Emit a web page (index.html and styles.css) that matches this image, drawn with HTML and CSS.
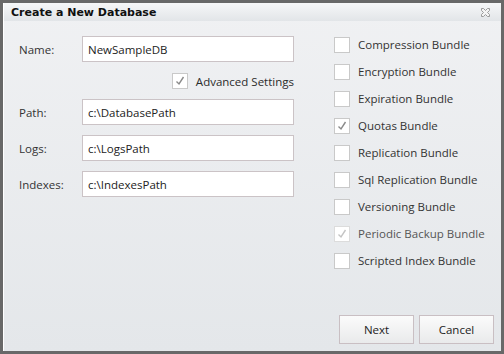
FILE: index.html
```html
<!DOCTYPE html>
<html>
<head>
<meta charset="utf-8">
<link rel="stylesheet" href="styles.css">
</head>
<body>
<div class="dialog">
  <div class="titlebar">
    <span class="title">Create a New Database</span>
    <svg class="close" width="11" height="11" viewBox="0 0 11 11"><path d="M1.5 1.5 H3.5 L5.5 3.5 L7.5 1.5 H9.5 V3.5 L7.5 5.5 L9.5 7.5 V9.5 H7.5 L5.5 7.5 L3.5 9.5 H1.5 V7.5 L3.5 5.5 L1.5 3.5 Z" fill="#f4f4f4" stroke="#9a9a9a" stroke-width="1"/></svg>
  </div>
  <div class="content">
    <div class="left">
      <div class="field"><label class="lbl">Name:</label><div class="input">NewSampleDB</div></div>
      <div class="adv"><span class="box"><svg width="14" height="14" viewBox="0 0 14 14"><path d="M3.5 7.5 L6 10 L10.5 3" fill="none" stroke="#8a8a8a" stroke-width="1.4"/></svg></span><span class="adv-text">Advanced Settings</span></div>
      <div class="field"><label class="lbl">Path:</label><div class="input">c:\DatabasePath</div></div>
      <div class="field"><label class="lbl">Logs:</label><div class="input">c:\LogsPath</div></div>
      <div class="field"><label class="lbl">Indexes:</label><div class="input">c:\IndexesPath</div></div>
    </div>
    <div class="right">
      <div class="opt"><span class="box"></span><span>Compression Bundle</span></div>
      <div class="opt"><span class="box"></span><span>Encryption Bundle</span></div>
      <div class="opt"><span class="box"></span><span>Expiration Bundle</span></div>
      <div class="opt"><span class="box"><svg width="14" height="14" viewBox="0 0 14 14"><path d="M3.5 7.5 L6 10 L10.5 3" fill="none" stroke="#8a8a8a" stroke-width="1.4"/></svg></span><span>Quotas Bundle</span></div>
      <div class="opt"><span class="box"></span><span>Replication Bundle</span></div>
      <div class="opt"><span class="box"></span><span>Sql Replication Bundle</span></div>
      <div class="opt"><span class="box"></span><span>Versioning Bundle</span></div>
      <div class="opt disabled"><span class="box"><svg width="14" height="14" viewBox="0 0 14 14"><path d="M3.5 7.5 L6 10 L10.5 3" fill="none" stroke="#c4c4c4" stroke-width="1.4"/></svg></span><span>Periodic Backup Bundle</span></div>
      <div class="opt"><span class="box"></span><span>Scripted Index Bundle</span></div>
    </div>
  </div>
  <div class="footer">
    <button class="btn">Next</button>
    <button class="btn">Cancel</button>
  </div>
</div>
</body>
</html>
```

FILE: styles.css
```css
html, body {
  margin: 0;
  padding: 0;
}
body {
  width: 504px;
  height: 354px;
  font-family: "Open Sans", "Noto Sans", sans-serif;
  font-size: 11.5px;
  color: #2b2b2b;
}
.dialog {
  box-sizing: border-box;
  width: 504px;
  height: 354px;
  border: 3px solid #686868;
  display: flex;
  flex-direction: column;
  background: linear-gradient(#f0f1f3, #e4e7ea);
  box-shadow: inset 1px 1px 0 #ffffff;
}
.titlebar {
  height: 18px;
  display: flex;
  align-items: center;
  justify-content: space-between;
  padding: 0 10px 0 7px;
  background: linear-gradient(#f6f7f8, #e2e5e8);
  border-left: 1px solid #ffffff;
}
.title {
  font-family: "DejaVu Sans", sans-serif;
  font-weight: bold;
  font-size: 11px;
  color: #111;
}
.close {
  display: block;
}
.content {
  flex: 1;
  display: flex;
  gap: 40px;
  padding-left: 15px;
  border-left: 1px solid #ffffff;
}
.left {
  display: flex;
  flex-direction: column;
  gap: 10px;
  padding-top: 15px;
  width: 275px;
}
.field {
  display: flex;
  align-items: center;
}
.lbl {
  width: 63px;
  color: #333;
}
.input {
  box-sizing: border-box;
  width: 212px;
  height: 26px;
  background: #fff;
  border: 1px solid #cbc3c6;
  padding-left: 5px;
  display: flex;
  align-items: center;
  color: #222;
}
.adv {
  display: flex;
  justify-content: flex-end;
  align-items: center;
  gap: 8px;
  height: 16px;
  margin-top: 1px;
}
.box {
  box-sizing: border-box;
  width: 16px;
  height: 16px;
  background: #fff;
  border: 1px solid #c9c9c9;
  display: flex;
  align-items: center;
  justify-content: center;
  flex: none;
}
.right {
  display: flex;
  flex-direction: column;
  padding-top: 10px;
}
.opt {
  height: 27px;
  display: flex;
  align-items: center;
  gap: 8px;
  color: #333;
}
.opt.disabled {
  color: #555;
}
.opt.disabled .box {
  border-color: #dcdcdc;
}
.footer {
  display: flex;
  justify-content: flex-end;
  gap: 5px;
  padding: 0 7px 7px 0;
}
.btn {
  box-sizing: border-box;
  width: 75px;
  height: 29px;
  border: 1px solid #c9bfc3;
  background: linear-gradient(#fbfbfb, #e9eaeb);
  font-family: "Open Sans", "Noto Sans", sans-serif;
  font-size: 11.5px;
  color: #222;
  padding: 0;
}
```
